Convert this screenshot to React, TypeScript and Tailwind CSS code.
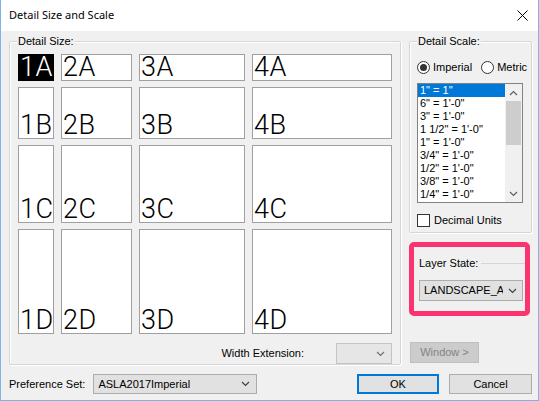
import React from "react"

const rows = ["A", "B", "C", "D"]
const cols = ["1", "2", "3", "4"]

const scales = [
  `1" = 1"`,
  `6" = 1'-0"`,
  `3" = 1'-0"`,
  `1 1/2" = 1'-0"`,
  `1" = 1'-0"`,
  `3/4" = 1'-0"`,
  `1/2" = 1'-0"`,
  `3/8" = 1'-0"`,
  `1/4" = 1'-0"`,
]

const Chevron = ({up = false, color = "#404040"}: {up?: boolean; color?: string}) => (
  <svg width="9" height="6" viewBox="0 0 9 6" className="shrink-0">
    <path
      d={up ? "M1 5 L4.5 1.5 L8 5" : "M1 1 L4.5 4.5 L8 1"}
      fill="none"
      stroke={color}
      strokeWidth="1.2"
    />
  </svg>
)

const GroupLabel = ({children}: {children: React.ReactNode}) => (
  <span className="absolute -top-[8px] left-[7px] bg-[#f0f0f0] px-[1px] leading-[14px]">
    {children}
  </span>
)

export default function App() {
  return (
    <div className="flex h-[401px] w-[539px] flex-col border-x border-b border-[#7eb4ea] bg-[#f0f0f0] font-['Liberation_Sans',Arial,sans-serif] text-[11px] text-black">
      {/* Title bar */}
      <div className="flex h-[31px] shrink-0 items-center justify-between bg-white pl-[8px] pr-[10px]">
        <span className="font-['Noto_Sans',sans-serif] text-[11px]">Detail Size and Scale</span>
        <svg width="11" height="11" viewBox="0 0 11 11">
          <path d="M0.5 0.5 L10.5 10.5 M10.5 0.5 L0.5 10.5" stroke="#000" strokeWidth="1" />
        </svg>
      </div>

      <div className="ml-[8px] mt-[10px] flex">
        {/* Detail Size group */}
        <div className="relative flex h-[324px] w-[392px] flex-col rounded-[2px] border border-[#d5d5d5] pl-[8px] pt-[12px] shadow-[inset_1px_1px_0_#fff,1px_1px_0_#fff]">
          <GroupLabel>Detail Size:</GroupLabel>
          <div className="grid grid-cols-[36px_71px_106px_140px] grid-rows-[27px_52px_78px_105px] gap-x-[7px] gap-y-[6px]">
            {rows.map((r) =>
              cols.map((c) => {
                const sel = r === "A" && c === "1"
                return (
                  <div
                    key={c + r}
                    className={`flex items-end border pl-[1px] ${
                      sel ? "border-black bg-black text-white" : "border-[#a0a0a0] bg-white text-black"
                    }`}
                  >
                    <span className="whitespace-nowrap font-['Roboto',sans-serif] text-[27px] font-light leading-[25px] tracking-[0.5px]">
                      {c}
                      {r}
                    </span>
                  </div>
                )
              }),
            )}
          </div>
          <div className="mt-[9px] flex items-center justify-end pr-[8px]">
            <span className="mr-[32px]">Width Extension:</span>
            <div className="flex h-[21px] w-[56px] items-center justify-end border border-[#c4c4c4] bg-[#e6e6e6] pr-[6px]">
              <Chevron color="#707070" />
            </div>
          </div>
        </div>

        {/* Right column */}
        <div className="ml-[8px] flex w-[123px] flex-col">
          <div className="relative flex h-[192px] flex-col rounded-[2px] border border-[#d5d5d5] pl-[7px] pt-[19px] shadow-[inset_1px_1px_0_#fff,1px_1px_0_#fff]">
            <GroupLabel>Detail Scale:</GroupLabel>
            <div className="flex h-[13px] items-center">
              <span className="flex h-[13px] w-[13px] items-center justify-center rounded-full border border-[#333] bg-white">
                <span className="h-[7px] w-[7px] rounded-full bg-[#333]" />
              </span>
              <span className="ml-[3px]">Imperial</span>
              <span className="ml-[9px] h-[13px] w-[13px] rounded-full border border-[#333] bg-white" />
              <span className="ml-[3px]">Metric</span>
            </div>
            <div className="mt-[9px] flex h-[120px] w-[106px] border border-[#828282] bg-white">
              <div className="flex flex-1 flex-col">
                {scales.map((s, i) => (
                  <div
                    key={i}
                    className={`h-[13px] pl-[2px] leading-[13px] ${i === 0 ? "bg-[#0078d7] text-white" : ""}`}
                  >
                    {s}
                  </div>
                ))}
              </div>
              <div className="flex w-[17px] flex-col bg-[#f0f0f0]">
                <div className="flex h-[17px] items-center justify-center">
                  <Chevron up color="#606060" />
                </div>
                <div className="mx-px h-[44px] bg-[#cdcdcd]" />
                <div className="flex-1" />
                <div className="flex h-[17px] items-center justify-center">
                  <Chevron color="#606060" />
                </div>
              </div>
            </div>
            <div className="mt-[9px] flex items-center">
              <span className="h-[13px] w-[13px] border border-[#333] bg-white" />
              <span className="ml-[4px]">Decimal Units</span>
            </div>
          </div>

          {/* Layer State, highlighted */}
          <div className="mt-[9px] flex h-[74px] w-[121px] flex-col rounded-[5px] border-[5px] border-[#fb3470] pl-[5px] pt-[10px]">
            <div className="flex h-[13px] items-center">
              <span>Layer State:</span>
              <span className="ml-[3px] h-px flex-1 bg-[#d5d5d5]" />
            </div>
            <div className="mt-[10px] flex h-[21px] w-[104px] items-center justify-between border border-[#adadad] bg-[#e1e1e1] pl-[4px] pr-[5px]">
              <span className="w-[79px] overflow-hidden whitespace-nowrap">LANDSCAPE_AR</span>
              <Chevron />
            </div>
          </div>

          <div className="ml-px mt-[26px] flex h-[21px] w-[69px] items-center justify-center border border-[#bfbfbf] bg-[#cccccc] text-[#838383]">
            Window &gt;
          </div>
        </div>
      </div>

      {/* Bottom row */}
      <div className="mt-[9px] flex h-[20px] items-center pl-[8px] pr-[6px]">
        <span>Preference Set:</span>
        <div className="ml-[8px] flex h-[20px] w-[164px] items-center justify-between border border-[#adadad] bg-[#e1e1e1] pl-[4px] pr-[6px]">
          <span>ASLA2017Imperial</span>
          <Chevron />
        </div>
        <div className="ml-auto flex h-[20px] w-[82px] items-center justify-center border-2 border-[#0078d7] bg-[#e1e1e1]">
          OK
        </div>
        <div className="ml-[10px] flex h-[20px] w-[83px] items-center justify-center border border-[#adadad] bg-[#e1e1e1]">
          Cancel
        </div>
      </div>
    </div>
  )
}
